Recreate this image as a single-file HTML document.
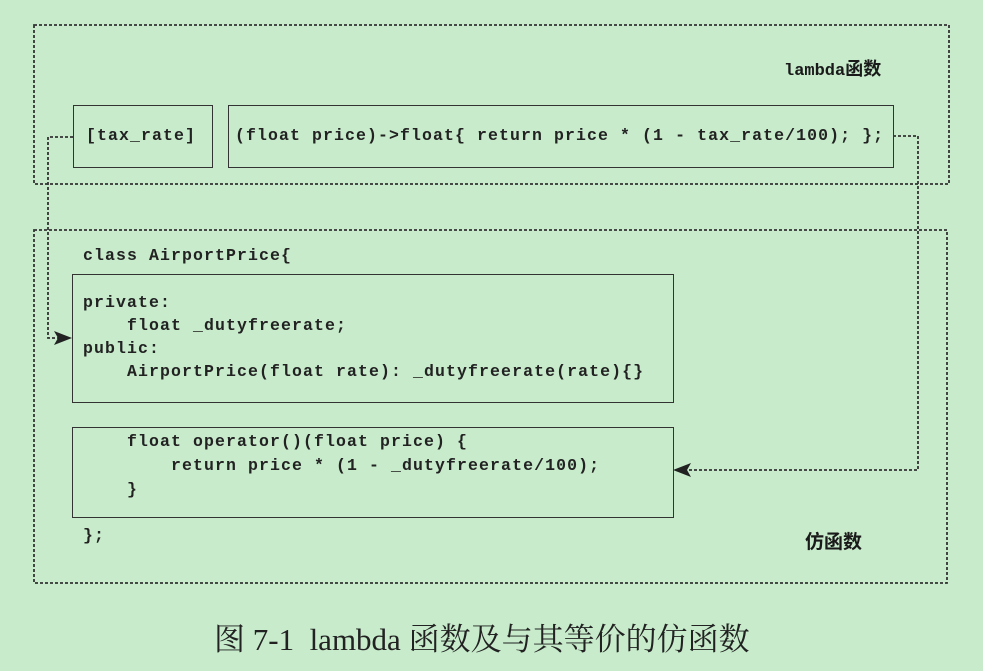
<!DOCTYPE html>
<html><head><meta charset="utf-8"><style>
body{margin:0;width:983px;height:671px;background:#c7ebcb;position:relative;overflow:hidden;font-family:"Liberation Mono",monospace;color:#1a1a1a}
.a{position:absolute}
.box{position:absolute;border:1.5px solid #333}
.c{position:absolute;font-size:16.5px;letter-spacing:1.1px;white-space:pre;line-height:23px;font-weight:bold;color:#222}
.lbl{position:absolute;font-family:"Liberation Sans","Noto Sans CJK SC",sans-serif;font-weight:bold;font-size:18px}
</style></head><body>
<svg class="a" style="left:0;top:0" width="983" height="671">
<g stroke="#333" stroke-width="1.8" stroke-dasharray="3,2" fill="none">
<rect x="34" y="25" width="915" height="159"/>
<rect x="34" y="230" width="913" height="353"/>
<path d="M73 137H48V338H64"/>
<path d="M893 136H918V470H684"/>
</g>
<path d="M72 338L54 331L58 338L54 345Z" fill="#222"/>
<path d="M673 470L691 463L687 470L691 477Z" fill="#222"/>
</svg>
<div class="box" style="left:73px;top:105px;width:138px;height:61px"></div>
<div class="box" style="left:228px;top:105px;width:664px;height:61px"></div>
<div class="lbl" style="left:784px;top:55px"><span style="font-family:'Liberation Mono',monospace;font-size:17px">lambda</span>函数</div>
<div class="c" style="left:86px;top:124px">[tax_rate]</div>
<div class="c" style="left:235px;top:124px">(float price)-&gt;float{ return price * (1 - tax_rate/100); };</div>
<div class="c" style="left:83px;top:244px">class AirportPrice{</div>
<div class="box" style="left:72px;top:274px;width:600px;height:127px"></div>
<div class="c" style="left:83px;top:291px">private:
    float _dutyfreerate;
public:
    AirportPrice(float rate): _dutyfreerate(rate){}</div>
<div class="box" style="left:72px;top:427px;width:600px;height:89px"></div>
<div class="c" style="left:83px;top:430px;line-height:24px">    float operator()(float price) {
        return price * (1 - _dutyfreerate/100);
    }</div>
<div class="c" style="left:83px;top:524px">};</div>
<div class="lbl" style="left:805px;top:527px;font-size:19px">仿函数</div>
<div class="a" style="left:214px;top:614px;font-family:'Liberation Serif','Noto Serif CJK SC',serif;font-size:31px;white-space:pre;color:#222">图 7-1  lambda 函数及与其等价的仿函数</div>
</body></html>
